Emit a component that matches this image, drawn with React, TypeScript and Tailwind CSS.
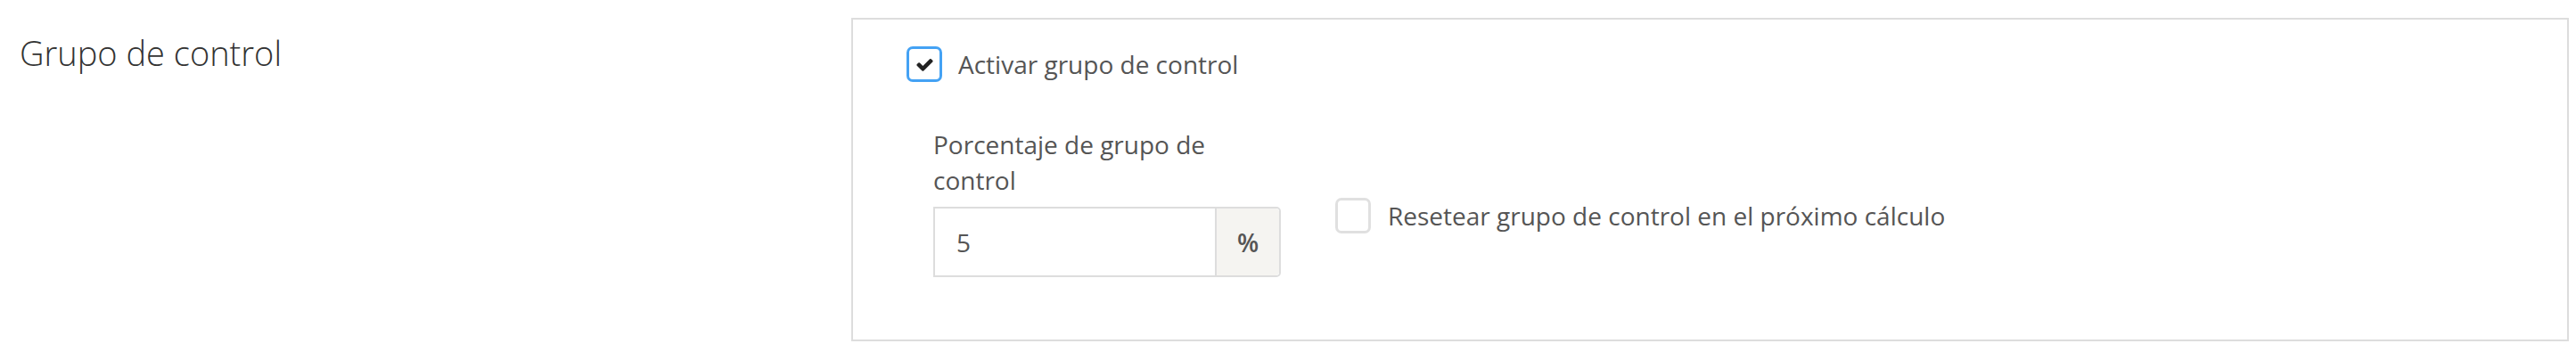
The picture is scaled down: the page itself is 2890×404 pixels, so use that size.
import React, { useState } from 'react';

const font = { fontFamily: '"Open Sans", "Noto Sans", sans-serif' };

function CheckIcon() {
  return (
    <svg viewBox="0 0 1792 1792" className="w-[21px] h-[21px]" fill="#222">
      <path d="M1671 566q0 40-28 68l-724 724-136 136q-28 28-68 28t-68-28l-136-136-362-362q-28-28-28-68t28-68l136-136q28-28 68-28t68 28l294 295 656-657q28-28 68-28t68 28l136 136q28 28 28 68z" />
    </svg>
  );
}

function Checkbox({ checked, onToggle }: { checked: boolean; onToggle: () => void }) {
  return (
    <button
      type="button"
      onClick={onToggle}
      className={`w-[40px] h-[40px] shrink-0 rounded-[7px] border-[3px] flex items-center justify-center bg-white ${
        checked ? 'border-[#44a2f4]' : 'border-[#e0e0e0]'
      }`}
    >
      {checked && <CheckIcon />}
    </button>
  );
}

export default function App() {
  const [active, setActive] = useState(true);
  const [reset, setReset] = useState(false);
  const [percent, setPercent] = useState('5');

  return (
    <div className="w-[2890px] h-[404px] bg-white flex" style={font}>
      <div className="w-[955px] shrink-0 pl-[22px] pt-[33px]">
        <h2 className="text-[38px] leading-[52px] font-light text-[#333]">Grupo de control</h2>
      </div>

      <div className="mt-[20px] w-[1927px] h-[363px] border-2 border-[#dddddd] pl-[60px] pt-[30px]">
        <label className="flex items-center gap-[18px] text-[28px] leading-[40px] text-[#555]">
          <Checkbox checked={active} onToggle={() => setActive(!active)} />
          <span>Activar grupo de control</span>
        </label>

        <div className="flex items-start mt-[50px] ml-[30px]">
          <div className="w-[390px]">
            <p className="text-[28px] leading-[40px] text-[#555]">Porcentaje de grupo de control</p>
            <div className="mt-[10px] flex h-[79px] border-2 border-[#dddddd] rounded-r-[5px]">
              <input
                value={percent}
                onChange={(e) => setPercent(e.target.value)}
                className="flex-1 min-w-0 px-[24px] text-[28px] text-[#555] outline-none bg-white"
                style={font}
              />
              <span className="w-[72px] flex items-center justify-center bg-[#f5f4f1] border-l-2 border-[#dddddd] text-[28px] font-semibold text-[#555] rounded-r-[4px]">
                %
              </span>
            </div>
          </div>

          <label className="ml-[61px] mt-[80px] flex items-center gap-[19px] text-[28px] leading-[40px] text-[#555]">
            <Checkbox checked={reset} onToggle={() => setReset(!reset)} />
            <span>Resetear grupo de control en el próximo cálculo</span>
          </label>
        </div>
      </div>
    </div>
  );
}
